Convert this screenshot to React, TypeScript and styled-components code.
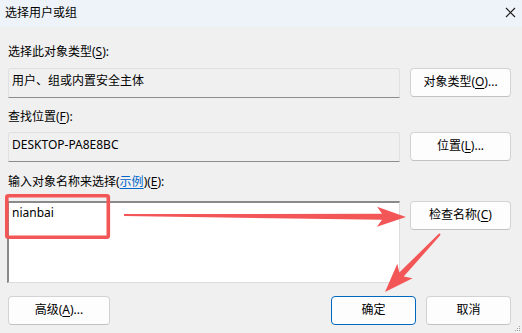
import styled, { createGlobalStyle } from "styled-components";

const GlobalStyle = createGlobalStyle`
  html, body {
    margin: 0;
    padding: 0;
    background: #f0f0f0;
  }
  body {
    font-family: "Noto Sans", "Noto Sans CJK SC", sans-serif;
    font-size: 12px;
    color: #000;
  }
`;

const Window = styled.div`
  position: relative;
  width: 522px;
  height: 333px;
  overflow: hidden;
  background: #f0f0f0;
  display: flex;
  flex-direction: column;
`;

const TitleBar = styled.div`
  height: 27px;
  flex: none;
  background: #eef2f9;
  display: flex;
  align-items: center;
  justify-content: space-between;
  padding: 0 6px 2px 5px;
  box-sizing: border-box;
`;

const Title = styled.span`
  font-size: 12px;
  line-height: 16px;
`;

const CloseIcon = styled.svg`
  width: 11px;
  height: 11px;
`;

const Body = styled.div`
  display: flex;
  flex-direction: column;
  padding: 0 11px 0 8px;
`;

const Label = styled.div<{ $top: number; $gap: number }>`
  height: 16px;
  line-height: 16px;
  margin-top: ${(p) => p.$top}px;
  margin-bottom: ${(p) => p.$gap}px;
`;

const Key = styled.span`
  text-decoration: underline;
  text-underline-offset: 2px;
`;

const Link = styled.span`
  color: #0066cc;
  text-decoration: underline;
  text-underline-offset: 2px;
`;

const Row = styled.div`
  display: grid;
  grid-template-columns: 392px 101px;
  column-gap: 10px;
  align-items: start;
`;

const Field = styled.div`
  height: 30px;
  box-sizing: border-box;
  border: 1px solid #e0e0e0;
  border-bottom-color: #8c8c8c;
  border-radius: 3px 3px 0 0;
  background: #f0f0f0;
  padding: 4px 3px 0;
  line-height: 16px;
`;

const NameArea = styled.div`
  height: 82px;
  box-sizing: border-box;
  margin-left: -1px;
  background: #fff;
  border: 1px solid #dcdcdc;
  border-top: 2px solid #8a8a8a;
  border-left: 2px solid #8a8a8a;
  padding: 2px 3px 0;
  line-height: 16px;
`;

const Button = styled.div<{ $primary?: boolean; $width?: number }>`
  width: ${(p) => (p.$width ? `${p.$width}px` : "auto")};
  height: 29px;
  box-sizing: border-box;
  border: 1px solid ${(p) => (p.$primary ? "#0067c0" : "#d3d3d3")};
  border-bottom-color: ${(p) => (p.$primary ? "#0067c0" : "#c2c2c2")};
  border-radius: 4px;
  background: #fdfdfd;
  display: flex;
  align-items: center;
  justify-content: center;
  line-height: 16px;
  padding-bottom: 1px;
`;

const Footer = styled.div`
  display: flex;
  align-items: center;
  margin-top: 13px;
  gap: 10px;
`;

const Spacer = styled.div`
  flex: 1;
`;

const Grip = styled.svg`
  position: absolute;
  right: 1px;
  bottom: 1px;
  width: 6px;
  height: 6px;
`;

const Overlay = styled.svg`
  position: absolute;
  left: 0;
  top: 0;
  width: 522px;
  height: 333px;
  pointer-events: none;
`;

type Pt = [number, number];

function arrowPoints(tail: Pt, tip: Pt, headLen: number, headHalf: number, w0: number, w1: number) {
  const dx = tip[0] - tail[0];
  const dy = tip[1] - tail[1];
  const len = Math.hypot(dx, dy);
  const ux = dx / len;
  const uy = dy / len;
  const nx = -uy;
  const ny = ux;
  const at = (d: number, off: number): Pt => [tail[0] + ux * d + nx * off, tail[1] + uy * d + ny * off];
  const base = len - headLen;
  const pts: Pt[] = [
    at(0, w0 / 2),
    at(base + 2, w1 / 2),
    at(base - 3, headHalf),
    at(len, 0),
    at(base - 3, -headHalf),
    at(base + 2, -w1 / 2),
    at(0, -w0 / 2),
  ];
  return pts.map((p) => `${p[0].toFixed(1)},${p[1].toFixed(1)}`).join(" ");
}

const RED = "#f35656";

export default function App() {
  return (
    <>
      <GlobalStyle />
      <Window>
        <TitleBar>
          <Title>选择用户或组</Title>
          <CloseIcon viewBox="0 0 11 11">
            <path d="M1 1 L10 10 M10 1 L1 10" stroke="#1a1a1a" strokeWidth="1.1" fill="none" />
          </CloseIcon>
        </TitleBar>
        <Body>
          <Label $top={17} $gap={8}>
            选择此对象类型(<Key>S</Key>):
          </Label>
          <Row>
            <Field>用户、组或内置安全主体</Field>
            <Button>
              对象类型(<Key>O</Key>)...
            </Button>
          </Row>
          <Label $top={11} $gap={7}>
            查找位置(<Key>F</Key>):
          </Label>
          <Row>
            <Field>DESKTOP-PA8E8BC</Field>
            <Button>
              位置(<Key>L</Key>)...
            </Button>
          </Row>
          <Label $top={12} $gap={11}>
            输入对象名称来选择(<Link>示例</Link>)(<Key>E</Key>):
          </Label>
          <Row>
            <NameArea>nianbai</NameArea>
            <Button>
              检查名称(<Key>C</Key>)
            </Button>
          </Row>
          <Footer>
            <Button $width={102}>
              高级(<Key>A</Key>)...
            </Button>
            <Spacer />
            <Button $primary $width={85}>
              确定
            </Button>
            <Button $width={85}>取消</Button>
          </Footer>
        </Body>
        <Grip viewBox="0 0 6 6">
          <rect x="4" y="0" width="1" height="1" fill="#a0a0a0" />
          <rect x="2" y="2" width="1" height="1" fill="#a0a0a0" />
          <rect x="4" y="2" width="1" height="1" fill="#a0a0a0" />
          <rect x="0" y="4" width="1" height="1" fill="#a0a0a0" />
          <rect x="2" y="4" width="1" height="1" fill="#a0a0a0" />
          <rect x="4" y="4" width="1" height="1" fill="#a0a0a0" />
        </Grip>
        <Overlay viewBox="0 0 522 333">
          <rect x="6.8" y="195.8" width="101.5" height="41.5" rx="1.5" fill="none" stroke={RED} strokeWidth="3.6" />
          <polygon points={arrowPoints([124, 215], [406, 217], 26, 10, 2, 6)} fill={RED} />
          <polygon points={arrowPoints([440, 234], [385, 292], 26, 10.5, 2, 6)} fill={RED} />
        </Overlay>
      </Window>
    </>
  );
}
